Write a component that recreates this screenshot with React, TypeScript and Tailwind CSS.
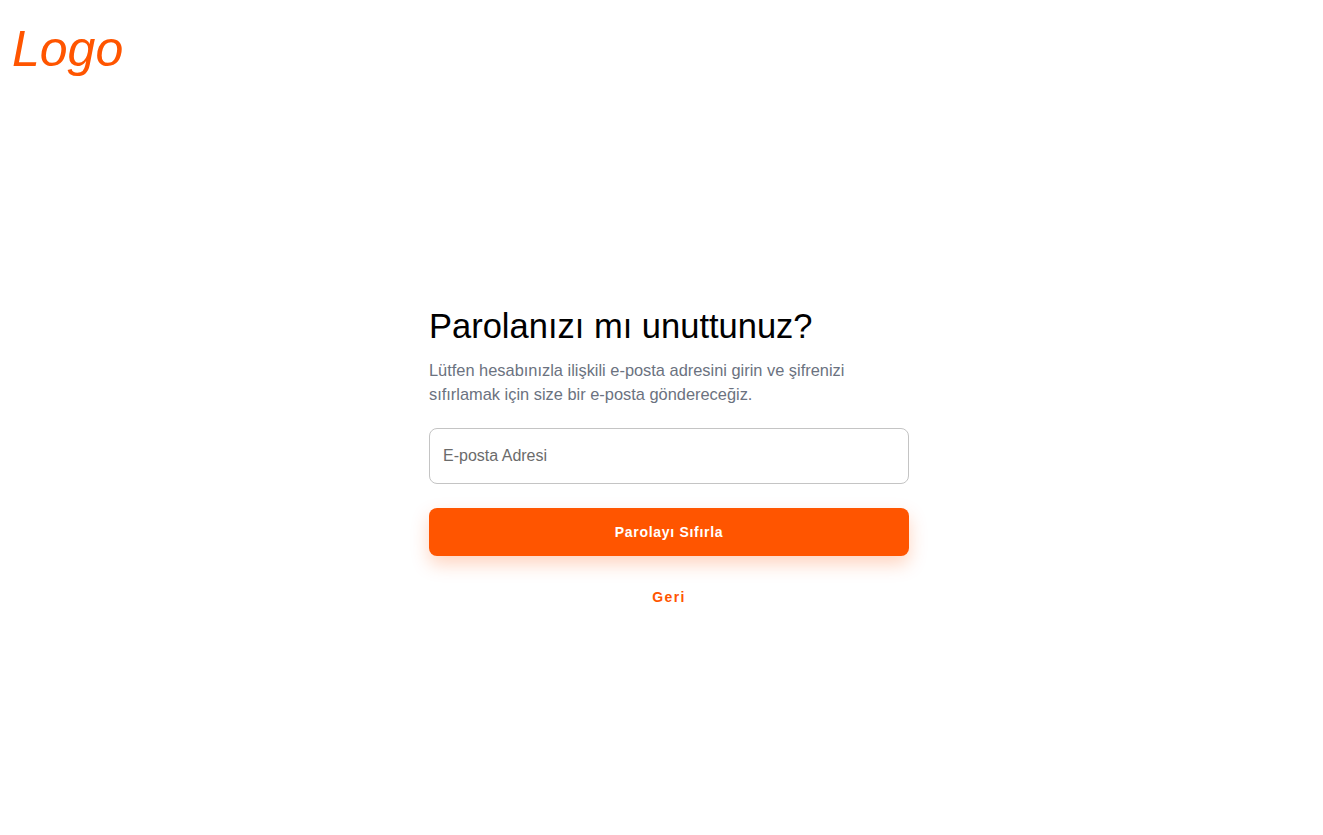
export default function App() {
  return (
    <div className="min-h-screen w-full bg-white font-['Liberation_Sans',Arial,sans-serif]">
      {/* Header */}
      <header className="pl-3 pt-[24px]">
        <div className="text-[50px] leading-none italic text-[#ff5500]">Logo</div>
      </header>

      <main className="flex justify-center pl-[15px] pt-[232px]">
        <div className="w-[480px] flex flex-col">
          <h1 className="text-[34.5px] leading-10 font-normal text-black">Parolanızı mı unuttunuz?</h1>
          <p className="mt-3 max-w-[440px] text-[16.4px] leading-6 text-[#6b7280]">
            Lütfen hesabınızla ilişkili e-posta adresini girin ve şifrenizi sıfırlamak için size bir e-posta göndereceğiz.
          </p>

          <input
            type="email"
            placeholder="E-posta Adresi"
            className="mt-[22px] h-14 w-full rounded-lg border border-[#c4c4c4] px-[13px] text-base text-gray-800 placeholder:text-[#6b6b6b] outline-none"
          />

          <button className="mt-6 h-12 w-full rounded-lg bg-[#ff5500] text-sm font-bold tracking-wider text-white shadow-[0_8px_18px_rgba(255,85,0,0.25)]">
            Parolayı Sıfırla
          </button>

          <a href="#" className="mt-[31px] self-center text-sm leading-5 font-bold tracking-widest text-[#ff5500]">
            Geri
          </a>
        </div>
      </main>
    </div>
  );
}
